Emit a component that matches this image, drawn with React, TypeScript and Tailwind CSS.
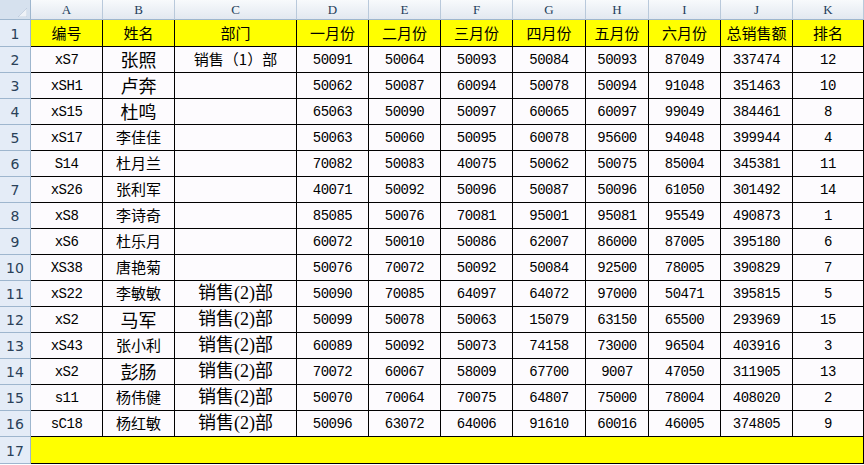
import React from "react";

type Row = {
  id: string;
  name: string;
  big?: boolean;
  dept?: "1" | "2";
  vals: string[];
};

const letters = ["A", "B", "C", "D", "E", "F", "G", "H", "I", "J", "K"];
const heads = [
  "编号",
  "姓名",
  "部门",
  "一月份",
  "二月份",
  "三月份",
  "四月份",
  "五月份",
  "六月份",
  "总销售额",
  "排名",
];

const rows: Row[] = [
  { id: "xS7", name: "张照", big: true, dept: "1", vals: ["50091", "50064", "50093", "50084", "50093", "87049", "337474", "12"] },
  { id: "xSH1", name: "卢奔", big: true, vals: ["50062", "50087", "60094", "50078", "50094", "91048", "351463", "10"] },
  { id: "xS15", name: "杜鸣", big: true, vals: ["65063", "50090", "50097", "60065", "60097", "99049", "384461", "8"] },
  { id: "xS17", name: "李佳佳", vals: ["50063", "50060", "50095", "60078", "95600", "94048", "399944", "4"] },
  { id: "S14", name: "杜月兰", vals: ["70082", "50083", "40075", "50062", "50075", "85004", "345381", "11"] },
  { id: "xS26", name: "张利军", vals: ["40071", "50092", "50096", "50087", "50096", "61050", "301492", "14"] },
  { id: "xS8", name: "李诗奇", vals: ["85085", "50076", "70081", "95001", "95081", "95549", "490873", "1"] },
  { id: "xS6", name: "杜乐月", vals: ["60072", "50010", "50086", "62007", "86000", "87005", "395180", "6"] },
  { id: "XS38", name: "唐艳菊", vals: ["50076", "70072", "50092", "50084", "92500", "78005", "390829", "7"] },
  { id: "xS22", name: "李敏敏", dept: "2", vals: ["50090", "70085", "64097", "64072", "97000", "50471", "395815", "5"] },
  { id: "xS2", name: "马军", big: true, dept: "2", vals: ["50099", "50078", "50063", "15079", "63150", "65500", "293969", "15"] },
  { id: "xS43", name: "张小利", dept: "2", vals: ["60089", "50092", "50073", "74158", "73000", "96504", "403916", "3"] },
  { id: "xS2", name: "彭肠", big: true, dept: "2", vals: ["70072", "60067", "58009", "67700", "9007", "47050", "311905", "13"] },
  { id: "s11", name: "杨伟健", dept: "2", vals: ["50070", "70064", "70075", "64807", "75000", "78004", "408020", "2"] },
  { id: "sC18", name: "杨红敏", dept: "2", vals: ["50096", "63072", "64006", "91610", "60016", "46005", "374805", "9"] },
];

const cell =
  "flex items-center justify-center border-r border-b border-black bg-[#fdfbfe] text-black whitespace-nowrap";
const mono = "font-['Liberation_Mono',monospace] text-[14px] tracking-[-0.5px] pt-[2px]";
const cjk = "font-['Noto_Sans_CJK_SC',sans-serif]";

function RowHead({ n }: { n: number }) {
  return (
    <div className="flex items-end justify-center border-r border-b border-[#9eb6ce] bg-[#e4ecf7] pb-[1px] font-['DejaVu_Sans',sans-serif] text-[14px] text-[#2a4159]">
      {n}
    </div>
  );
}

export default function App() {
  return (
    <div className="h-[465px] w-[864px] overflow-hidden bg-white">
      <div className="grid grid-cols-[31px_72px_72px_122px_72px_72px_72px_73px_63px_72px_72px_71px] grid-rows-[20px_27px_repeat(15,26px)_27px]">
        {/* corner */}
        <div className="flex items-end justify-end border-r border-b border-[#9eb6ce] bg-[#d6e1ee] pr-[3px] pb-[2px]">
          <svg width="9" height="9" viewBox="0 0 9 9">
            <polygon points="9,0 9,9 0,9" fill="#eef2f7" stroke="#b3c3d6" strokeWidth="0.6" />
          </svg>
        </div>
        {letters.map((l) => (
          <div
            key={l}
            className="flex items-center justify-center border-r border-b border-r-[#b9c9db] border-b-[#9eb6ce] bg-gradient-to-b from-[#f8fafc] to-[#e2e8f0] font-['Liberation_Serif',serif] text-[13px] text-[#233d5a]"
          >
            {l}
          </div>
        ))}

        {/* header row */}
        <RowHead n={1} />
        {heads.map((h) => (
          <div key={h} className={`${cell} ${cjk} bg-[#ffff00] text-[15px]`}>
            {h}
          </div>
        ))}

        {rows.map((r, i) => (
          <React.Fragment key={i}>
            <RowHead n={i + 2} />
            <div className={`${cell} ${mono}`}>{r.id}</div>
            <div className={`${cell} ${cjk} ${r.big ? "text-[18px]" : "text-[15px]"}`}>
              {r.name}
            </div>
            {r.dept === "1" ? (
              <div className={`${cell} ${cjk} text-[15px]`}>销售（1）部</div>
            ) : r.dept === "2" ? (
              <div className={`${cell} font-['Liberation_Serif','Noto_Sans_CJK_SC',serif] text-[18px]`}>
                销售(2)部
              </div>
            ) : (
              <div className={cell} />
            )}
            {r.vals.map((v, j) => (
              <div key={j} className={`${cell} ${mono}`}>
                {v}
              </div>
            ))}
          </React.Fragment>
        ))}

        <RowHead n={17} />
        <div className="col-span-11 border-r border-b border-black bg-[#ffff00]" />
      </div>
    </div>
  );
}
